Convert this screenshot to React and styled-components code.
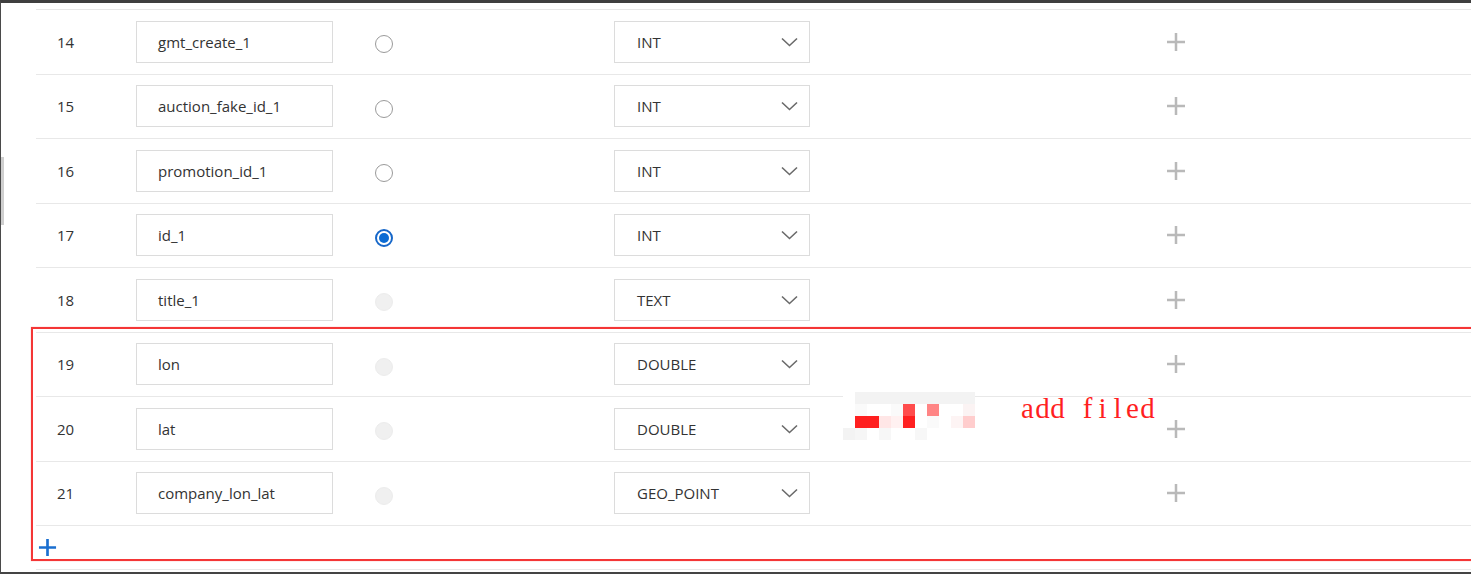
import React from "react";
import styled, { createGlobalStyle } from "styled-components";

const Global = createGlobalStyle`
  html, body { margin: 0; padding: 0; background: #fff; }
  body { font-family: "Open Sans", "Noto Sans", sans-serif; }
  * { box-sizing: border-box; }
`;

const Frame = styled.div`
  position: relative;
  width: 1471px;
  height: 574px;
  overflow: hidden;
  border-top: 3px solid #3f3f3f;
  border-left: 1px solid #4a4a4a;
  border-bottom: 2px solid #444;
  padding: 6px 0 0 35px;
  background: #fff;
`;

const ScrollThumb = styled.div`
  position: absolute;
  left: 0;
  top: 154px;
  width: 3px;
  height: 68px;
  background: #cfcfcf;
`;

const Table = styled.div`
  border-top: 1px solid #e8e8e8;
`;

const Row = styled.div`
  display: grid;
  grid-template-columns: 100px 239px 239px 552px 1fr;
  align-items: center;
  height: 64.5px;
  border-bottom: 1px solid #e8e8e8;
`;

const Num = styled.div`
  padding-left: 21px;
  font-size: 15px;
  color: #333;
`;

const Field = styled.div`
  width: 197px;
  height: 42px;
  border: 1px solid #dcdcdc;
  padding-left: 21px;
  display: flex;
  align-items: center;
  font-size: 15px;
  color: #333;
  background: #fff;
`;

const Radio = styled.span`
  display: block;
  width: 18px;
  height: 18px;
  margin-top: 5px;
  border-radius: 50%;
  position: relative;
  background: ${(p) => (p.$disabled ? "#f0f0f0" : "#fff")};
  border: ${(p) =>
    p.$checked ? "2px solid #1667c9" : p.$disabled ? "1px solid #ececec" : "1.5px solid #9a9a9a"};
  &::after {
    content: "";
    display: ${(p) => (p.$checked ? "block" : "none")};
    position: absolute;
    left: 2px;
    top: 2px;
    width: 10px;
    height: 10px;
    border-radius: 50%;
    background: #0b6bd3;
  }
`;

const Select = styled.div`
  width: 196px;
  height: 42px;
  border: 1px solid #dcdcdc;
  padding: 0 11px 0 22px;
  display: flex;
  align-items: center;
  justify-content: space-between;
  font-size: 15px;
  color: #333;
  background: #fff;
`;

const PlusCell = styled.div`
  display: flex;
  align-items: center;
  height: 20px;
`;

const AddArea = styled.div`
  height: 44px;
  border-bottom: 1px solid #e8e8e8;
  display: flex;
  align-items: center;
  padding-left: 2px;
`;

const Annotation = styled.div`
  position: absolute;
  left: 30px;
  top: 324px;
  width: 1460px;
  height: 234px;
  border: 2px solid #f43636;
  box-shadow: 0 0 1px rgba(255, 60, 60, 0.5);
  pointer-events: none;
`;

const Note = styled.div`
  position: absolute;
  left: 1019px;
  top: 388px;
  display: flex;
  font-family: "Liberation Serif", "DejaVu Serif", serif;
  font-size: 29px;
  line-height: 34px;
  color: #ff1f1f;
`;

const NoteChar = styled.span`
  display: block;
  width: 15px;
  text-align: center;
  white-space: pre;
`;

const Mosaic = styled.div`
  position: absolute;
  left: 842px;
  top: 389px;
  display: grid;
  grid-template-columns: repeat(11, 12px);
  grid-auto-rows: 12px;
`;

const Cell = styled.span`
  display: block;
  background: ${(p) => p.$c};
`;

const Chevron = () => (
  <svg width="17" height="10" viewBox="0 0 17 10">
    <path d="M1 1.5 L8.5 8.5 L16 1.5" fill="none" stroke="#6a6a6a" strokeWidth="1.6" />
  </svg>
);

const Plus = ({ color = "#b9b9b9", size = 20, w = 2.5 }) => (
  <svg width={size} height={size} viewBox="0 0 20 20">
    <path d="M10 1 V19 M1 10 H19" stroke={color} strokeWidth={w} fill="none" />
  </svg>
);

const rows = [
  { n: 14, name: "gmt_create_1", type: "INT" },
  { n: 15, name: "auction_fake_id_1", type: "INT" },
  { n: 16, name: "promotion_id_1", type: "INT" },
  { n: 17, name: "id_1", type: "INT", checked: true },
  { n: 18, name: "title_1", type: "TEXT", disabled: true },
  { n: 19, name: "lon", type: "DOUBLE", disabled: true },
  { n: 20, name: "lat", type: "DOUBLE", disabled: true },
  { n: 21, name: "company_lon_lat", type: "GEO_POINT", disabled: true },
];

const W = "#ffffff";
const G = "#f3f3f3";
const mosaic = [
  [W, G, G, G, G, G, G, G, G, G, G],
  [W, "#fafafa", W, W, "#fafafa", "#ff4c4c", W, "#ff8585", W, W, "#fbf3f3"],
  [W, "#ff1f1f", "#ff1f1f", "#ffe6e6", "#fff1f1", "#ff1f1f", W, "#fafafa", W, "#fdf4f4", "#ffcdcd"],
  [G, "#f6f6f6", W, "#f7f7f7", W, W, "#f7f7f7", W, W, W, W],
];

export default function App() {
  return (
    <>
      <Global />
      <Frame>
        <ScrollThumb />
        <Table>
          {rows.map((r) => (
            <Row key={r.n}>
              <Num>{r.n}</Num>
              <Field>{r.name}</Field>
              <Radio $checked={r.checked} $disabled={r.disabled} />
              <Select>
                <span>{r.type}</span>
                <Chevron />
              </Select>
              <PlusCell>
                <Plus />
              </PlusCell>
            </Row>
          ))}
          <AddArea>
            <Plus color="#1a6fd0" size={19} w={2.8} />
          </AddArea>
        </Table>
        <Mosaic>
          {mosaic.flat().map((c, i) => (
            <Cell key={i} $c={c} />
          ))}
        </Mosaic>
        <Note>
          {"add filed".split("").map((ch, i) => (
            <NoteChar key={i}>{ch}</NoteChar>
          ))}
        </Note>
        <Annotation />
      </Frame>
    </>
  );
}
